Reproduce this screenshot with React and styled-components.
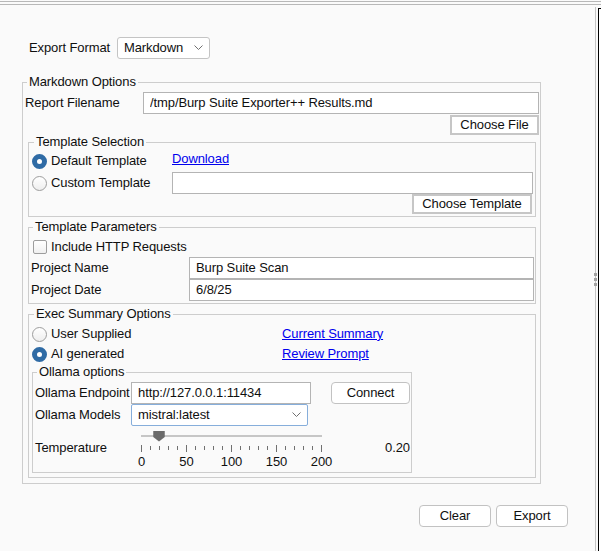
import React from 'react';
import styled, { createGlobalStyle } from 'styled-components';

const Global = createGlobalStyle`
  html, body { margin: 0; padding: 0; background: #fafafa; }
  body {
    font-family: "Liberation Sans", Arial, sans-serif;
    font-size: 13px;
    letter-spacing: -0.1px;
    color: #0f0f0f;
  }
  * { box-sizing: border-box; }
`;

const Window = styled.div`
  width: 601px;
  height: 551px;
  overflow: hidden;
  background: #fafafa;
  display: flex;
  flex-direction: column;
`;

const TopRule = styled.div`
  flex: none;
  margin-top: 1px;
  height: 4px;
  border-top: 1px solid #b8b8b8;
  border-bottom: 1px solid #b8b8b8;
`;

const Body = styled.div`
  flex: 1;
  display: flex;
  min-height: 0;
`;

const Main = styled.div`
  flex: none;
  width: 595px;
  display: flex;
  flex-direction: column;
  padding-top: 32px;
`;

const Splitter = styled.div`
  flex: none;
  width: 1px;
  margin-top: 2px;
  background: #c4c4c4;
  display: flex;
  flex-direction: column;
  align-items: center;
  justify-content: center;
  gap: 2px;
`;

const GripDot = styled.span`
  flex: none;
  width: 3px;
  height: 3px;
  background: #a2a2a2;
`;

const EdgePane = styled.div`
  flex: none;
  width: 3px;
  margin: 3px 0 0 2px;
  border-top: 1px solid #000;
  border-left: 1px solid #000;
  background: #fff;
`;

const FormatRow = styled.div`
  display: flex;
  align-items: center;
  height: 22px;
  margin-left: 29px;
`;

const FormatLabel = styled.span`
  width: 88px;
  margin-bottom: 2px;
`;

const Select = styled.div`
  width: ${p => p.$w}px;
  height: 22px;
  background: #fff;
  border: 1px solid ${p => (p.$focus ? '#86aedb' : '#c4c4c4')};
  border-radius: ${p => (p.$focus ? 2 : 3)}px;
  display: flex;
  align-items: center;
  justify-content: space-between;
  padding: 0 6px 2px 6px;
  white-space: nowrap;
`;

const Group = styled.div`
  display: flex;
  flex-direction: column;
  border: 1px solid #cdcdcd;
  margin: ${p => p.$m};
  padding: ${p => p.$p};
  width: ${p => (p.$w ? `${p.$w}px` : 'auto')};
`;

const GroupTitle = styled.div`
  align-self: flex-start;
  margin: -9px 0 0 2px;
  padding: 0 2px;
  line-height: 15px;
  background: #fafafa;
  white-space: nowrap;
`;

const FieldRow = styled.div`
  display: flex;
  align-items: center;
  height: ${p => p.$h || 22}px;
  margin-top: ${p => p.$mt || 0}px;
`;

const FieldLabel = styled.span`
  flex: none;
  width: ${p => p.$w}px;
  margin-bottom: 2px;
  white-space: nowrap;
`;

const TextInput = styled.input`
  flex: none;
  width: ${p => p.$w}px;
  height: 22px;
  margin: 0;
  padding: 0 6px 2px 6px;
  border: 1px solid #b4b4b4;
  background: #fff;
  color: inherit;
  font: inherit;
  letter-spacing: inherit;
  outline: none;
`;

const ButtonRow = styled.div`
  display: flex;
  justify-content: flex-end;
  gap: ${p => p.$gap || 0}px;
  margin-top: ${p => p.$mt || 0}px;
  padding-right: ${p => p.$pr || 0}px;
`;

const SquareButton = styled.button`
  width: ${p => p.$w}px;
  height: 20px;
  margin: 0;
  padding: 0 0 2px 0;
  border: 2px solid #c6c6c6;
  background: #fff;
  color: inherit;
  font: inherit;
  letter-spacing: inherit;
`;

const RoundButton = styled.button`
  flex: none;
  width: ${p => p.$w}px;
  height: 22px;
  margin: 0 0 0 ${p => p.$ml || 0}px;
  padding: 0 0 2px 0;
  border: 1px solid #c2c2c2;
  border-radius: 4px;
  background: #fff;
  color: inherit;
  font: inherit;
  letter-spacing: inherit;
`;

const OptionGrid = styled.div`
  display: grid;
  grid-template-columns: ${p => p.$cols};
  grid-auto-rows: ${p => p.$row}px;
  align-items: center;
  margin-top: ${p => p.$mt || 0}px;
`;

const Choice = styled.label`
  display: flex;
  align-items: center;
  gap: 4px;
  white-space: nowrap;
`;

const ChoiceText = styled.span`
  margin-bottom: 2px;
`;

const Radio = styled.span`
  flex: none;
  width: 15px;
  height: 15px;
  border-radius: 50%;
  border: ${p => (p.$on ? '5px solid #2f6ba5' : '1px solid #9d9d9d')};
  background: ${p => (p.$on ? '#fff' : 'linear-gradient(#ffffff, #eeeeee)')};
`;

const Checkbox = styled.span`
  flex: none;
  width: 14px;
  height: 14px;
  margin-left: 2px;
  border: 1px solid #9d9d9d;
  border-radius: 2px;
  background: linear-gradient(#ffffff, #f0f0f0);
`;

const Link = styled.a`
  color: #0000ee;
  text-decoration: underline;
  white-space: nowrap;
  justify-self: start;
  margin-bottom: ${p => p.$raise || 2}px;
`;

const SliderRow = styled.div`
  display: flex;
  align-items: flex-start;
  height: 46px;
`;

const SliderLabel = styled.span`
  flex: none;
  width: 96px;
  margin-top: 14px;
  line-height: 15px;
`;

const SliderValue = styled.span`
  flex: 1;
  margin-top: 14px;
  line-height: 15px;
  text-align: right;
`;

const SliderSvg = styled.svg`
  flex: none;
  display: block;
  overflow: visible;
`;

const Chevron = () => (
  <svg width="9" height="5" viewBox="0 0 9 5">
    <polyline points="0.5,0.5 4.5,4.5 8.5,0.5" fill="none" stroke="#707070" strokeWidth="1" />
  </svg>
);

const TemperatureSlider = ({ value }) => {
  const x0 = 10;
  const span = 180;
  const ticks = Array.from({ length: 21 }, (_, i) => i * 10);
  const tx = x0 + (span * value) / 200;
  return (
    <SliderSvg width="205" height="46" viewBox="0 0 205 46">
      <rect x={x0} y="9" width={span + 1} height="2" fill="#c6c6c6" />
      <polygon
        points={`${tx - 5.75},5 ${tx + 5.75},5 ${tx + 5.75},11 ${tx},15.5 ${tx - 5.75},11`}
        fill="#6b6b6b"
      />
      {ticks.map(t => {
        const x = x0 + (span * t) / 200 + 0.5;
        const major = t % 50 === 0;
        return (
          <line
            key={t}
            x1={x}
            x2={x}
            y1={major ? 19 : 20}
            y2={major ? 26 : 24}
            stroke="#707070"
            strokeWidth="1"
          />
        );
      })}
      {[0, 50, 100, 150, 200].map(t => (
        <text
          key={t}
          x={x0 + (span * t) / 200 + 0.5}
          y="40"
          textAnchor="middle"
          fontFamily='"Liberation Sans", Arial, sans-serif'
          fontSize="13"
          letterSpacing="-0.1"
          fill="#0f0f0f"
        >
          {t}
        </text>
      ))}
    </SliderSvg>
  );
};

export default function App() {
  return (
    <Window>
      <Global />
      <TopRule />
      <Body>
        <Main>
          <FormatRow>
            <FormatLabel>Export Format</FormatLabel>
            <Select $w={93}>
              <span>Markdown</span>
              <Chevron />
            </Select>
          </FormatRow>

          <Group $m="23px 0 0 22px" $w={519} $p="0 1px 5px 2px">
            <GroupTitle>Markdown Options</GroupTitle>
            <FieldRow $mt={3}>
              <FieldLabel $w={118}>Report Filename</FieldLabel>
              <TextInput $w={396} readOnly value="/tmp/Burp Suite Exporter++ Results.md" />
            </FieldRow>
            <ButtonRow $mt={1}>
              <SquareButton $w={89}>Choose File</SquareButton>
            </ButtonRow>

            <Group $m="7px 3px 0 3px" $p="0 2px 2px 3px">
              <GroupTitle>Template Selection</GroupTitle>
              <OptionGrid $cols="140px 361px" $row={22} $mt={1}>
                <Choice>
                  <Radio $on />
                  <ChoiceText>Default Template</ChoiceText>
                </Choice>
                <Link href="#" $raise={5}>Download</Link>
                <Choice>
                  <Radio />
                  <ChoiceText>Custom Template</ChoiceText>
                </Choice>
                <TextInput $w={361} readOnly value="" />
              </OptionGrid>
              <ButtonRow $pr={1}>
                <SquareButton $w={120}>Choose Template</SquareButton>
              </ButtonRow>
            </Group>

            <Group $m="10px 3px 0 3px" $p="0 1px 2px 2px">
              <GroupTitle>Template Parameters</GroupTitle>
              <FieldRow $h={20} $mt={3}>
                <Choice>
                  <Checkbox />
                  <ChoiceText>Include HTTP Requests</ChoiceText>
                </Choice>
              </FieldRow>
              <FieldRow>
                <FieldLabel $w={158}>Project Name</FieldLabel>
                <TextInput $w={345} readOnly value="Burp Suite Scan" />
              </FieldRow>
              <FieldRow>
                <FieldLabel $w={158}>Project Date</FieldLabel>
                <TextInput $w={345} readOnly value="6/8/25" />
              </FieldRow>
            </Group>

            <Group $m="10px 3px 0 3px" $p="0 2px 4px 3px">
              <GroupTitle>Exec Summary Options</GroupTitle>
              <OptionGrid $cols="250px 1fr" $row={20} $mt={3}>
                <Choice>
                  <Radio />
                  <ChoiceText>User Supplied</ChoiceText>
                </Choice>
                <Link href="#">Current Summary</Link>
                <Choice>
                  <Radio $on />
                  <ChoiceText>AI generated</ChoiceText>
                </Choice>
                <Link href="#">Review Prompt</Link>
              </OptionGrid>

              <Group $m="8px 0 0 0" $w={380} $p="0 1px 0 2px">
                <GroupTitle>Ollama options</GroupTitle>
                <FieldRow $mt={3}>
                  <FieldLabel $w={96}>Ollama Endpoint</FieldLabel>
                  <TextInput $w={180} readOnly value="http://127.0.0.1:11434" />
                  <RoundButton $w={79} $ml={20}>Connect</RoundButton>
                </FieldRow>
                <FieldRow>
                  <FieldLabel $w={96}>Ollama Models</FieldLabel>
                  <Select $w={177} $focus>
                    <span>mistral:latest</span>
                    <Chevron />
                  </Select>
                </FieldRow>
                <SliderRow>
                  <SliderLabel>Temperature</SliderLabel>
                  <TemperatureSlider value={20} />
                  <SliderValue>0.20</SliderValue>
                </SliderRow>
              </Group>
            </Group>
          </Group>

          <ButtonRow $mt={21} $gap={5} $pr={27}>
            <RoundButton $w={72}>Clear</RoundButton>
            <RoundButton $w={72}>Export</RoundButton>
          </ButtonRow>
        </Main>
        <Splitter>
          <GripDot />
          <GripDot />
          <GripDot />
        </Splitter>
        <EdgePane />
      </Body>
    </Window>
  );
}
